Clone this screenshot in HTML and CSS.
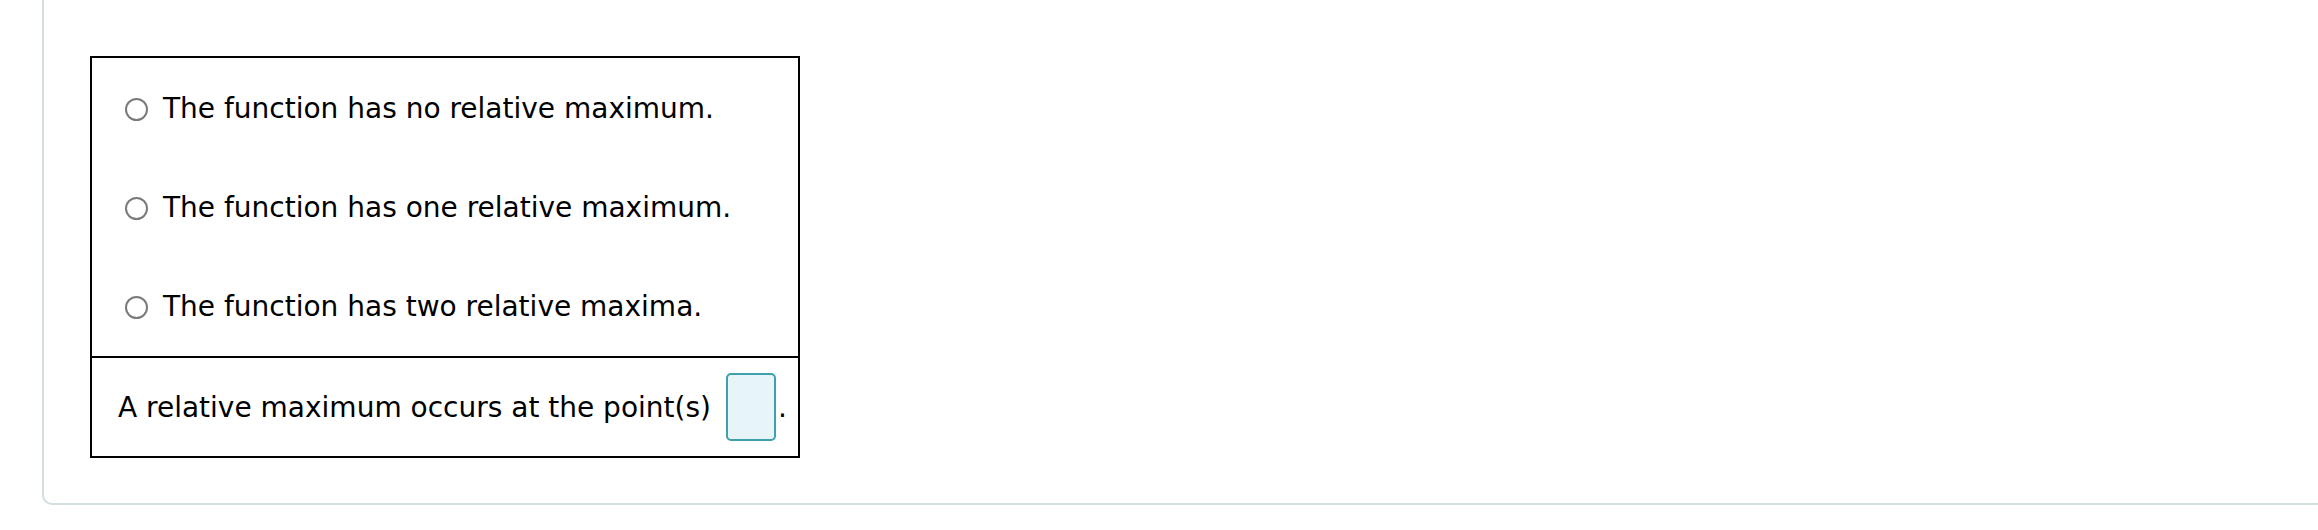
FILE: index.html
```html
<!DOCTYPE html>
<html lang="en">
<head>
<meta charset="utf-8">
<title>Relative maximum</title>
<link rel="stylesheet" href="styles.css">
</head>
<body>
<div class="card">
  <div class="question">
    <div class="options">
      <div class="option"><span class="radio"></span><span class="label">The function has no relative maximum.</span></div>
      <div class="option"><span class="radio"></span><span class="label">The function has one relative maximum.</span></div>
      <div class="option"><span class="radio"></span><span class="label">The function has two relative maxima.</span></div>
    </div>
    <div class="answer">
      <span class="label">A relative maximum occurs at the point(s)</span>
      <span class="input-box"></span>
      <span class="period">.</span>
    </div>
  </div>
</div>
</body>
</html>
```

FILE: styles.css
```css
html, body {
  margin: 0;
  padding: 0;
  overflow: hidden;
  background: #ffffff;
}

body {
  font-family: "DejaVu Sans", Verdana, sans-serif;
  font-size: 28px;
  color: #000000;
}

.card {
  box-sizing: border-box;
  width: 2284px;
  margin-left: 42px;
  border: 2px solid #d4dde0;
  border-top: none;
  border-radius: 0 0 10px 10px;
  padding: 56px 0 45px 46px;
}

.question {
  box-sizing: border-box;
  width: 710px;
  border: 2px solid #000000;
}

.options {
  display: flex;
  flex-direction: column;
  padding-top: 1px;
}

.option {
  height: 99px;
  display: flex;
  align-items: center;
  padding-left: 33px;
}

.radio {
  box-sizing: border-box;
  width: 23px;
  height: 23px;
  border: 2px solid #7a7a7a;
  border-radius: 50%;
  margin-right: 15px;
  margin-top: 1px;
  flex: none;
}

.label {
  white-space: nowrap;
}

.answer {
  border-top: 2px solid #000000;
  height: 98px;
  display: flex;
  align-items: center;
  padding-left: 26px;
}

.input-box {
  box-sizing: border-box;
  width: 50px;
  height: 68px;
  margin-left: 15px;
  border: 2px solid #3e9fae;
  border-radius: 5px;
  background: #e7f5f9;
  flex: none;
}

.period {
  margin-left: 2px;
}
```
